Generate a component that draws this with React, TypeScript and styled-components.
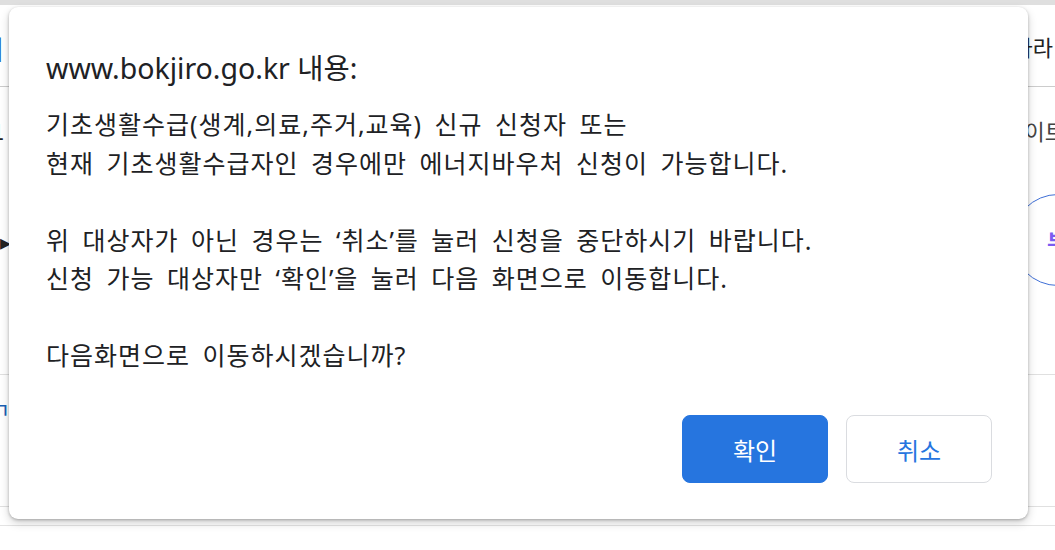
import React from "react";
import styled, { createGlobalStyle } from "styled-components";

const Global = createGlobalStyle`
  html, body { margin: 0; padding: 0; background: #ffffff; }
  body { font-family: "Noto Sans", "Noto Sans CJK KR", sans-serif; }
  * { box-sizing: border-box; }
`;

const Page = styled.div`
  position: relative;
  width: 1055px;
  height: 550px;
  overflow: hidden;
  background: #ffffff;
  font-family: "Noto Sans", "Noto Sans CJK KR", sans-serif;
`;

const TopStrip = styled.div`
  height: 5px;
  background: #dfdfdf;
`;

const Row = styled.div<{ $h: number; $line?: string; $align?: string; $pad?: number }>`
  height: ${(p) => p.$h}px;
  display: flex;
  justify-content: space-between;
  align-items: ${(p) => p.$align || "center"};
  padding-top: ${(p) => p.$pad || 0}px;
  border-bottom: ${(p) => (p.$line ? `1px solid ${p.$line}` : "none")};
`;

const EdgeText = styled.span<{ $color?: string; $side: "left" | "right"; $offset: number }>`
  font-family: "Noto Sans CJK KR", sans-serif;
  font-size: 22px;
  line-height: 30px;
  color: ${(p) => p.$color || "#222222"};
  white-space: nowrap;
  ${(p) => (p.$side === "left" ? `margin-left: ${p.$offset}px;` : `margin-right: ${p.$offset}px;`)}
`;

const Pill = styled.div`
  width: 120px;
  height: 92px;
  margin-right: -77px;
  border: 1.5px solid #3f6fd6;
  border-radius: 46px;
  display: flex;
  align-items: center;
  padding-left: 34px;
  font-family: "Noto Sans CJK KR", sans-serif;
  font-size: 22px;
  font-weight: 700;
  color: #7a5cf0;
`;

const Dialog = styled.div`
  position: absolute;
  left: 9px;
  top: 7px;
  width: 1019px;
  height: 512px;
  background: #ffffff;
  border-radius: 9px;
  box-shadow: 0 1px 3px rgba(0, 0, 0, 0.25), 0 4px 10px rgba(0, 0, 0, 0.18);
  padding: 42px 36px 36px 37px;
  display: flex;
  flex-direction: column;
`;

const Title = styled.div`
  font-family: "Noto Sans", "Noto Sans CJK KR", sans-serif;
  font-size: 28.5px;
  line-height: 38px;
  color: #202124;
`;

const Message = styled.div`
  margin-top: 18px;
  font-family: "Noto Sans", "Noto Sans CJK KR", sans-serif;
  font-size: 25px;
  line-height: 38.5px;
  letter-spacing: 1px;
  word-spacing: 5px;
  color: #202124;
  white-space: pre-wrap;
  flex: 1;
`;

const Actions = styled.div`
  display: flex;
  justify-content: flex-end;
  gap: 18px;
`;

const Button = styled.button<{ $primary?: boolean }>`
  width: 146px;
  height: 68px;
  border-radius: 8px;
  font-family: "Noto Sans CJK KR", sans-serif;
  font-size: 24px;
  cursor: pointer;
  border: 1px solid ${(p) => (p.$primary ? "#2675df" : "#dadce0")};
  background: ${(p) => (p.$primary ? "#2675df" : "#ffffff")};
  color: ${(p) => (p.$primary ? "#ffffff" : "#2675df")};
`;

const message =
  "기초생활수급(생계,의료,주거,교육) 신규 신청자 또는\n현재 기초생활수급자인 경우에만 에너지바우처 신청이 가능합니다.\n\n위 대상자가 아닌 경우는 ‘취소’를 눌러 신청을 중단하시기 바랍니다.\n신청 가능 대상자만 ‘확인’을 눌러 다음 화면으로 이동합니다.\n\n다음화면으로 이동하시겠습니까?";

export default function App() {
  return (
    <>
      <Global />
      <Page>
        <TopStrip />
        <Row $h={82} $line="#cccccc">
          <EdgeText $side="left" $offset={-3} $color="#1a5fb4">|</EdgeText>
          <EdgeText $side="right" $offset={2}>알림나라</EdgeText>
        </Row>
        <Row $h={107} $align="flex-start" $pad={28}>
          <EdgeText $side="left" $offset={-8}>1</EdgeText>
          <EdgeText $side="right" $offset={-10} $color="#444444">사이트</EdgeText>
        </Row>
        <Row $h={92}>
          <EdgeText $side="left" $offset={0}>▸</EdgeText>
          <Pill>부</Pill>
        </Row>
        <Row $h={89} $line="#e0e0e0" />
        <Row $h={132} $line="#e0e0e0" $align="flex-start" $pad={18}>
          <EdgeText $side="left" $offset={-10} $color="#1a5fb4">ㄱ</EdgeText>
        </Row>
        <Row $h={19} $line="#e3e3e3" />
        <Dialog role="dialog">
          <Title>www.bokjiro.go.kr 내용:</Title>
          <Message>{message}</Message>
          <Actions>
            <Button $primary>확인</Button>
            <Button>취소</Button>
          </Actions>
        </Dialog>
      </Page>
    </>
  );
}
